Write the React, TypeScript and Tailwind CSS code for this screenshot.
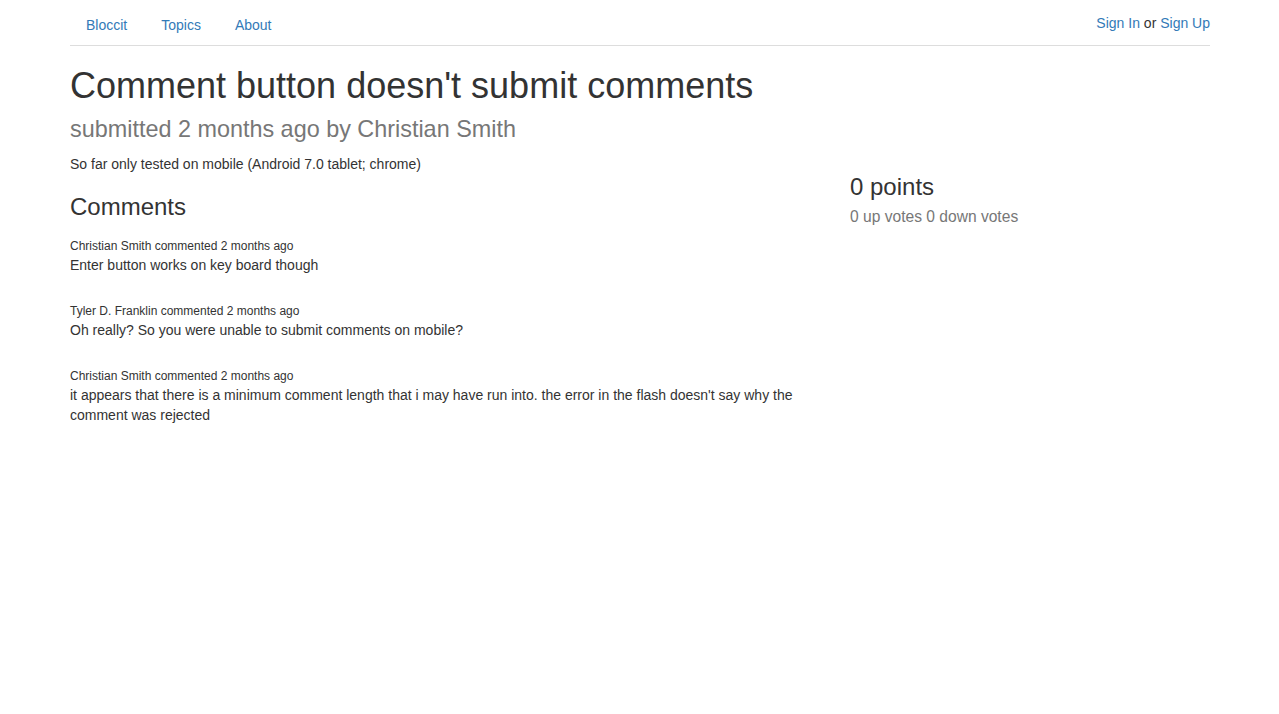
const comments = [
  { author: 'Christian Smith', when: '2 months ago', body: 'Enter button works on key board though' },
  { author: 'Tyler D. Franklin', when: '2 months ago', body: 'Oh really? So you were unable to submit comments on mobile?' },
  {
    author: 'Christian Smith',
    when: '2 months ago',
    body: "it appears that there is a minimum comment length that i may have run into. the error in the flash doesn't say why the comment was rejected",
  },
];

export default function App() {
  return (
    <div className="min-h-[714px] bg-white font-['Liberation_Sans',Arial,sans-serif] text-[14px] leading-5 text-[#333]">
      <div className="mx-auto w-[1170px] pl-[15.5px] pr-[14.5px]">
        {/* Top nav */}
        <div className="flex items-start justify-between border-b border-[#ddd] pt-[5px]">
          <ul className="ml-[1px] flex">
            <li className="mr-[4px]">
              <a href="#" className="block px-[15px] py-[10px] leading-5 text-[#337ab7]">Bloccit</a>
            </li>
            <li className="mr-[4px]">
              <a href="#" className="block px-[15px] py-[10px] leading-5 text-[#337ab7]">Topics</a>
            </li>
            <li>
              <a href="#" className="block px-[15px] py-[10px] leading-5 text-[#337ab7]">About</a>
            </li>
          </ul>
          <div className="mt-[8px] leading-5">
            <a href="#" className="text-[#337ab7]">Sign In</a> or{' '}
            <a href="#" className="text-[#337ab7]">Sign Up</a>
          </div>
        </div>

        <h1 className="mt-[20px] mb-[9px] text-[36px] leading-[1.1]">
          Comment button doesn't submit comments
          <br />
          <small className="relative -top-px text-[65%] text-[#777]">submitted 2 months ago by Christian Smith</small>
        </h1>

        <div className="-mx-[15px] flex">
          <div className="w-[780px] px-[15px]">
            <p className="mb-[10px]">So far only tested on mobile (Android 7.0 tablet; chrome)</p>
            <h3 className="mt-[20px] mb-[10px] text-[24px] leading-[1.1]">Comments</h3>
            <div>
              {comments.map((c, i) => (
                <div key={i} className="pt-[7px] pb-[21px]">
                  <div className="text-[12px] leading-[17px]">
                    {c.author} commented {c.when}
                  </div>
                  <p>{c.body}</p>
                </div>
              ))}
            </div>
          </div>
          <div className="w-[390px] px-[15px]">
            <h3 className="mt-[20px] mb-[10px] text-[24px] leading-[1.1]">
              0 points
              <br />
              <small className="text-[65%] text-[#777]">0 up votes 0 down votes</small>
            </h3>
          </div>
        </div>
      </div>
    </div>
  );
}
